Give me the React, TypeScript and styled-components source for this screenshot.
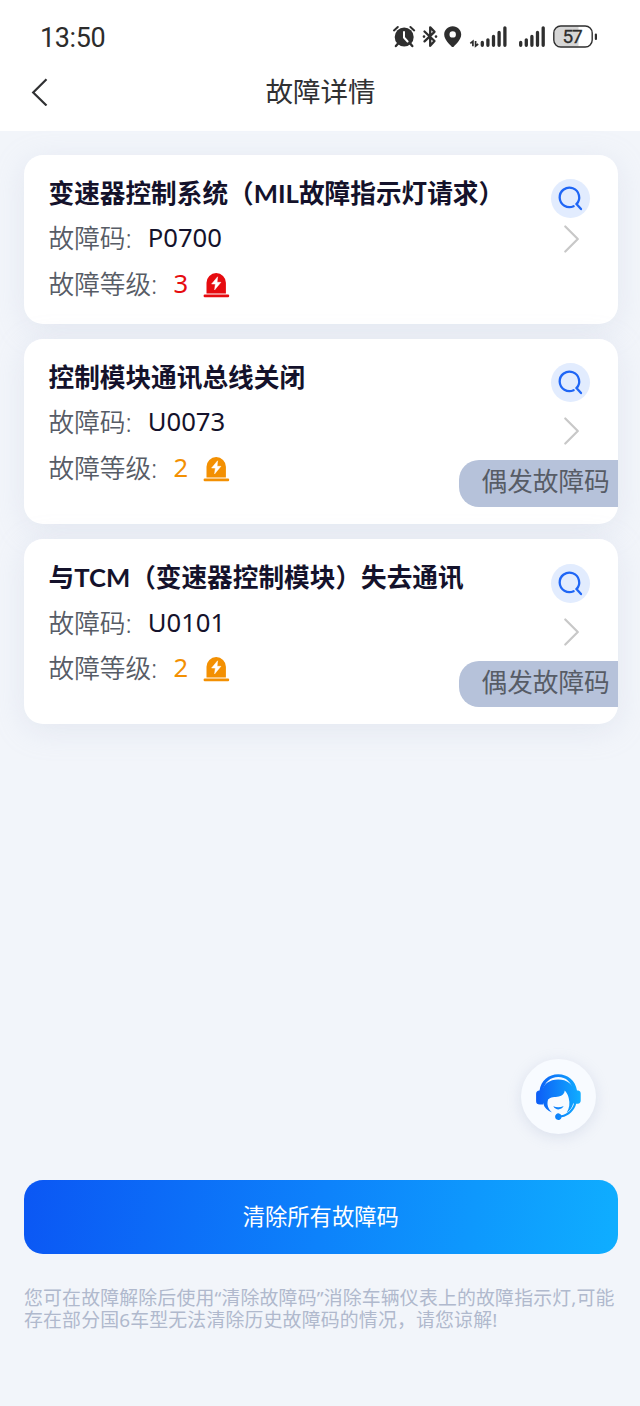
import React from "react";
import styled, { createGlobalStyle } from "styled-components";

const GlobalStyle = createGlobalStyle`
  * { box-sizing: border-box; }
  body {
    margin: 0;
    background: #f2f5fa;
    font-family: "Noto Sans", "Noto Sans CJK SC", sans-serif;
  }
  svg { display: block; }
`;

const Screen = styled.div`
  width: 640px;
  height: 1406px;
  overflow: hidden;
  display: flex;
  flex-direction: column;
  background: #f2f5fa;
`;

const Header = styled.header`
  flex: none;
  height: 131px;
  background: #fff;
`;

const StatusBar = styled.div`
  height: 74px;
  padding: 0 42px 0 40px;
  display: flex;
  align-items: center;
  justify-content: space-between;
`;

const Clock = styled.span`
  margin-top: 2px;
  font: 400 27px/32px Roboto, sans-serif;
  letter-spacing: -0.4px;
  color: #2c2c2c;
`;

const NavBar = styled.div`
  height: 36px;
  padding: 0 30px 0 31px;
  display: grid;
  grid-template-columns: 20px 1fr 20px;
  align-items: center;
`;

const NavTitle = styled.h1`
  margin: 0;
  text-align: center;
  font-weight: 400;
  font-size: 27.5px;
  line-height: 36px;
  color: #303133;
`;

const FaultList = styled.main`
  padding: 23.5px 22.5px 0 24px;
  display: flex;
  flex-direction: column;
  gap: 15.3px;
`;

const Card = styled.section<{ $tall?: boolean }>`
  position: relative;
  height: ${(p) => (p.$tall ? 185 : 169)}px;
  padding: 16px 27.5px 0 24.5px;
  display: flex;
  justify-content: space-between;
  border-radius: 19px;
  background: #fff;
  box-shadow: 0 6px 30px rgba(185, 192, 218, 0.26);
`;

const Info = styled.div`
  display: flex;
  flex-direction: column;
`;

const FaultName = styled.h2`
  margin: 0;
  font-family: Lato, "Noto Sans CJK SC", sans-serif;
  font-weight: 700;
  font-size: 25.67px;
  line-height: 45.5px;
  color: #14122b;
  white-space: nowrap;
`;

const Field = styled.div`
  display: flex;
  align-items: center;
  height: 45.5px;
  line-height: 45.5px;
  font-size: 25.67px;
  white-space: nowrap;
`;

const Label = styled.span`
  color: #575c66;
  font-weight: 350;
`;

const Value = styled.span<{ $color?: string }>`
  margin: 0 0 2px 16px;
  color: ${(p) => p.$color ?? "#14122b"};
`;

const LevelIcon = styled.span`
  margin: 1px 0 0 15px;
`;

const Actions = styled.div<{ $gap: number }>`
  width: 39px;
  padding-top: 8.5px;
  display: flex;
  flex-direction: column;
  align-items: center;
  gap: ${(p) => p.$gap}px;
`;

const SearchButton = styled.button`
  width: 39px;
  height: 39px;
  padding: 0;
  border: 0;
  border-radius: 50%;
  background: #e2ecfe;
`;

const Tag = styled.span`
  position: absolute;
  right: 0;
  bottom: 17px;
  width: 158.5px;
  height: 46.5px;
  padding-left: 22.5px;
  border-radius: 20px 0 0 20px;
  background: #b6c2da;
  color: #575c66;
  font-size: 25.67px;
  line-height: 43px;
  white-space: nowrap;
`;

const Footer = styled.footer`
  margin-top: auto;
  height: 348px;
  padding: 0 22.5px 0 24px;
  display: flex;
  flex-direction: column;
`;

const SupportButton = styled.button`
  align-self: flex-end;
  flex: none;
  width: 75px;
  height: 75px;
  margin: 0.5px 21.5px 46.5px 0;
  padding: 0;
  border: 0;
  border-radius: 50%;
  background: #f8fbff;
  box-shadow: 0 3px 14px rgba(165, 178, 210, 0.3);
`;

const ClearButton = styled.button`
  flex: none;
  height: 73.5px;
  padding: 0;
  border: 0;
  border-radius: 19px;
  background: linear-gradient(98deg, #0b57f4, #0d82fb 50%, #0faeff);
  color: #fff;
  font-family: inherit;
  font-size: 22.3px;
  line-height: 73px;
`;

const Note = styled.p`
  margin: 33px 0 0;
  font-size: 18.9px;
  letter-spacing: 0.16px;
  line-height: 22px;
  color: #b0b9cd;
  white-space: nowrap;
`;

const INK = "#2e2e2e";

function StatusIcons() {
  return (
    <svg width="206" height="26" viewBox="392 24 206 26" fill={INK}>
      <g fill="none" stroke={INK} strokeLinecap="round">
        <path d="M394 30.4l3.8-3.4M410.4 27l3.8 3.4" strokeWidth="2" />
        <path d="M398.5 43l-2.6 3M409.7 43l2.6 3" strokeWidth="2.4" />
      </g>
      <circle cx="404.2" cy="37" r="9.5" />
      <path d="M404 32v5.5l3.6 4" fill="none" stroke="#fff" strokeWidth="2" strokeLinecap="round" />
      <g fill="none" stroke={INK} strokeWidth="2.3" strokeLinecap="round" strokeLinejoin="round">
        <path d="M424.5 31.5l10 9.5-4.3 4.8V27.3l4.3 4.6-10 9.5" />
      </g>
      <circle cx="424" cy="36.6" r="1.3" />
      <circle cx="436" cy="36.6" r="1.3" />
      <path
        fillRule="evenodd"
        d="M452.7 26.2c-4.9 0-8.5 3.7-8.5 8.3 0 5.2 5.6 10 7.3 12 .7.7 1.7.7 2.4 0 1.7-2 7.3-6.8 7.3-12 0-4.6-3.6-8.300-8.5-8.300zm0 5a3.2 3.2 0 1 1 0 6.4 3.2 3.2 0 0 1 0-6.4z"
      />
      <path
        d="M470.300 43.300l2.600-2v5M475.600 41v5l2.600-2"
        fill="none"
        stroke={INK}
        strokeWidth="1.700"
      />
      <g stroke={INK} strokeWidth="3.300" strokeLinecap="round">
        <path d="M482.300 42.500v2.800M487.900 39.800v5.500M493.500 36.500v8.800M499.100 32.500v12.800M504.900 27.800v17.500" />
        <path d="M520.700 42.500v2.800M526.300 39.800v5.500M531.900 36.500v8.800M537.500 32.500v12.800M543.200 27.800v17.500" />
      </g>
      <path d="M561 26.500h17.500v20H561a7 7 0 0 1-7-7v-6a7 7 0 0 1 7-7z" fill="#d6d6d6" />
      <rect x="553.8" y="26" width="38.4" height="21" rx="7" fill="none" stroke={INK} strokeWidth="1.4" />
      <path d="M595.9 34.500v4.500" stroke={INK} strokeWidth="2.200" strokeLinecap="round" />
      <text
        x="572.6"
        y="43.4"
        textAnchor="middle"
        fontFamily="Roboto, sans-serif"
        fontWeight="400"
        fontSize="19"
        stroke={INK}
        strokeWidth="0.3"
        textLength="20"
      >
        57
      </text>
    </svg>
  );
}

function BackIcon() {
  return (
    <svg width="18" height="28" viewBox="0 0 18 28" fill="none" stroke="#303133" strokeWidth="2.2">
      <path d="M15.5 1.2L2.2 14.5l13.3 13" />
    </svg>
  );
}

function SearchIcon() {
  return (
    <svg width="39" height="39" viewBox="0 0 39 39" fill="none" stroke="#1f66f5" strokeWidth="2.3" strokeLinecap="round">
      <path d="M22.6 27.2a9.75 9.75 0 1 1 2.9-2.1l4.5 5" />
    </svg>
  );
}

function ChevronIcon() {
  return (
    <svg width="17" height="28" viewBox="0 0 17 28" fill="none" stroke="#c8c8c8" strokeWidth="2.2" strokeLinecap="round" strokeLinejoin="round">
      <path d="M3.3 1.5L15.8 14 3.3 26.5" />
    </svg>
  );
}

function AlarmIcon({ color }: { color: string }) {
  return (
    <svg width="27" height="26" viewBox="0 0 27 26">
      <path d="M3.5 21.5V10.8a9.7 9.7 0 0 1 19.4 0v10.7z" fill={color} />
      <rect x="0.6" y="22.6" width="25.6" height="2.7" rx="1.2" fill={color} />
      <path d="M14.6 4.8l-6 7.2h3.7l-.7 5.9 6.3-7.6h-3.8z" fill="#fff" stroke="#fff" strokeWidth="0.5" />
    </svg>
  );
}

function SupportIcon() {
  return (
    <svg width="75" height="75" viewBox="0 0 75 75">
      <defs>
        <linearGradient id="support" x1="15" y1="0" x2="60" y2="0" gradientUnits="userSpaceOnUse">
          <stop offset="0" stopColor="#0d5cf6" />
          <stop offset="1" stopColor="#10aeff" />
        </linearGradient>
      </defs>
      <g fill="url(#support)">
        <path d="M18.5 31.5C20 21.5 27.5 15.2 37.2 15.2S54.5 21.5 56 31.5h1.3c1.6.4 2.4 1.4 2.4 3v7c0 1.9-1 3-3 3.2h-1.5C53.5 51.3 48 57 40.6 58.3a3.3 3.3 0 1 1-.2-2C46.5 55 51.3 50.5 53 44.5l-.7-12.7C50.5 23.3 45 18 37.2 18S23.5 23.3 22 31.5v14h-3.2c-2.4 0-3.7-1.2-3.7-3.3v-7.4c0-1.9 1.2-3.1 3.4-3.3z" />
        <path d="M20.8 33c1.2-8 7.7-12.6 16.4-12.6S52.5 25.2 53.7 33v11.5h-1.5c-1.2 4.3-3.3 7.3-6.5 9.2 2.7-4.3 3.4-9.5 2-14.7-.7-3-1.9-5.4-3.9-7.5-.4 3.2-2.5 5.3-6 6-4.1.8-8.2.3-10.700 3-1.5 4.6-.3 9.2 4 13-4.5-1.7-7.7-4.6-9-9.2z" />
        <path d="M32.3 47.3c3.3 1.4 7 1.3 10.4-.2-2.3 4.3-8 4.5-10.4.2z" />
      </g>
    </svg>
  );
}

const RED = "#e60b0f";
const ORANGE = "#f39002";

const faults = [
  { name: "变速器控制系统（MIL故障指示灯请求）", code: "P0700", level: 3, occasional: false },
  { name: "控制模块通讯总线关闭", code: "U0073", level: 2, occasional: true },
  { name: "与TCM（变速器控制模块）失去通讯", code: "U0101", level: 2, occasional: true },
];

export default function App() {
  return (
    <>
      <GlobalStyle />
      <Screen>
        <Header>
          <StatusBar>
            <Clock>13:50</Clock>
            <StatusIcons />
          </StatusBar>
          <NavBar>
            <BackIcon />
            <NavTitle>故障详情</NavTitle>
          </NavBar>
        </Header>
        <FaultList>
          {faults.map((fault) => {
            const color = fault.level >= 3 ? RED : ORANGE;
            return (
              <Card key={fault.code} $tall={fault.occasional}>
                <Info>
                  <FaultName>{fault.name}</FaultName>
                  <Field>
                    <Label>故障码:</Label>
                    <Value>{fault.code}</Value>
                  </Field>
                  <Field>
                    <Label>故障等级:</Label>
                    <Value $color={color}>{fault.level}</Value>
                    <LevelIcon>
                      <AlarmIcon color={color} />
                    </LevelIcon>
                  </Field>
                </Info>
                <Actions $gap={fault.occasional ? 15 : 7}>
                  <SearchButton>
                    <SearchIcon />
                  </SearchButton>
                  <ChevronIcon />
                </Actions>
                {fault.occasional && <Tag>偶发故障码</Tag>}
              </Card>
            );
          })}
        </FaultList>
        <Footer>
          <SupportButton>
            <SupportIcon />
          </SupportButton>
          <ClearButton>清除所有故障码</ClearButton>
          <Note>
            您可在故障解除后使用“清除故障码”消除车辆仪表上的故障指示灯,可能
            <br />
            存在部分国6车型无法清除历史故障码的情况，请您谅解!
          </Note>
        </Footer>
      </Screen>
    </>
  );
}
